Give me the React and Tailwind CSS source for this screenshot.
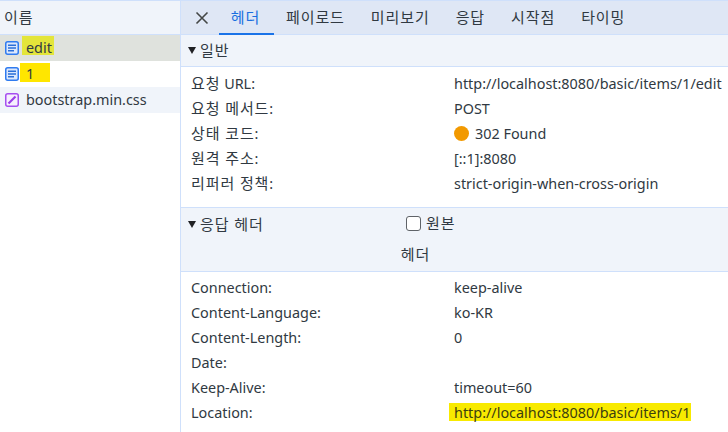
import React from 'react';

const font = { fontFamily: '"Noto Sans", "Noto Sans CJK KR", sans-serif' };

// Korean runs are wider in the reference than Noto's default advance
function K({ children }) {
  return <span className="text-[15px] tracking-[0.9px]">{children}</span>;
}

function DocIcon() {
  return (
    <svg width="14" height="14" viewBox="0 0 14 14" className="shrink-0">
      <rect x="0.75" y="0.75" width="12.5" height="12.5" rx="2" fill="#dce8fc" stroke="#2f7bf0" strokeWidth="1.5" />
      <path d="M3 4.3h8M3 7h8M3 9.7h6" stroke="#2a6fd8" strokeWidth="1.4" />
    </svg>
  );
}

function CssIcon() {
  return (
    <svg width="14" height="14" viewBox="0 0 14 14" className="shrink-0">
      <rect x="0.75" y="0.75" width="12.5" height="12.5" rx="2" fill="#f6effe" stroke="#a64ff0" strokeWidth="1.5" />
      <path d="M3.5 10.5l7-7" stroke="#9a3fe8" strokeWidth="2.2" />
    </svg>
  );
}

function FileRow({ icon, name, rowClass, mark }) {
  return (
    <div className={`isolate relative flex items-center gap-[7px] pl-[5px] h-[26px] ${rowClass}`}>
      {mark && <span className={`absolute -z-10 ${mark}`} />}
      {icon}
      <span>{name}</span>
    </div>
  );
}

function Row({ label, children }) {
  return (
    <div className="flex items-center h-[25px]">
      <div className="w-[273px] pl-[10px] shrink-0">{label}</div>
      <div className="flex items-center">{children}</div>
    </div>
  );
}

function Triangle() {
  return <span className="w-0 h-0 border-x-[4.5px] border-x-transparent border-t-[7px] border-t-[#202124] mr-[4px] ml-[7px]" />;
}

export default function App() {
  const tabs = ['페이로드', '미리보기', '응답', '시작점', '타이밍'];
  return (
    <div className="w-[728px] h-[432px] overflow-hidden flex bg-white text-[14.4px] text-[#303942] border-t border-[#cfe0fb]" style={font}>
      <div className="w-[180px] shrink-0 flex flex-col">
        <div className="h-[34px] flex items-center pl-[4px] bg-[#f0f4fa] border-b border-[#cfe0fb]"><K>이름</K></div>
        <FileRow icon={<DocIcon />} name="edit" rowClass="bg-[#dfe2dd]" mark="left-[22px] w-[32px] top-[1px] h-[19px] bg-[#e3e53a]" />
        <FileRow icon={<DocIcon />} name="1" rowClass="bg-white" mark="left-[20px] w-[30px] top-[2px] h-[19px] bg-[#ffe600]" />
        <FileRow icon={<CssIcon />} name="bootstrap.min.css" rowClass="bg-[#f0f4fa]" />
      </div>

      <div className="flex-1 flex flex-col border-l border-[#cfe0fb]">
        <div className="h-[34px] flex items-stretch bg-[#dfe7f5] border-b border-[#cfe0fb]">
          <div className="w-[38px] flex items-center justify-center pl-[3px]">
            <svg width="14" height="14" viewBox="0 0 14 14">
              <path d="M1.5 1.5l11 11M12.5 1.5l-11 11" stroke="#444746" strokeWidth="1.6" />
            </svg>
          </div>
          <div className="w-[55px] flex items-center justify-center pr-[2px] text-[#1a6fe0] border-b-2 border-[#1a73e8] -mb-[1px]"><K>헤더</K></div>
          <div className="flex items-center gap-[26px] pl-[12px]">
            {tabs.map(t => <K key={t}>{t}</K>)}
          </div>
        </div>

        <div className="h-[32px] flex items-center bg-[#f0f4fa] border-b border-[#cfe0fb]">
          <Triangle /><K>일반</K>
        </div>
        <div className="py-[4px] h-[141px] border-b border-[#cfe0fb]">
          <Row label={<><K>요청</K> URL:</>}>http://localhost:8080/basic/items/1/edit</Row>
          <Row label={<><K>요청 메서드</K>:</>}>POST</Row>
          <Row label={<><K>상태 코드</K>:</>}>
            <span className="w-[15px] h-[15px] rounded-full bg-[#f29900] mr-[6px]" />302 Found
          </Row>
          <Row label={<><K>원격 주소</K>:</>}>[::1]:8080</Row>
          <Row label={<><K>리퍼러 정책</K>:</>}>strict-origin-when-cross-origin</Row>
        </div>

        <div className="h-[64px] bg-[#f0f4fa] border-b border-[#cfe0fb] flex flex-col">
          <div className="h-[32px] flex items-center relative">
            <Triangle /><K>응답 헤더</K>
            <span className="absolute left-[225px] top-[8px] w-[15px] h-[15px] rounded-[3px] border border-[#5f6368] bg-white" />
            <span className="absolute left-[245px] top-[4px]"><K>원본</K></span>
          </div>
          <div className="h-[29px] flex items-center justify-center pr-[78px]"><K>헤더</K></div>
        </div>
        <div className="py-[3px]">
          <Row label="Connection:">keep-alive</Row>
          <Row label="Content-Language:">ko-KR</Row>
          <Row label="Content-Length:">0</Row>
          <Row label="Date:" />
          <Row label="Keep-Alive:">timeout=60</Row>
          <Row label="Location:">
            <span className="relative isolate text-[#3d3f10]">
              <span className="absolute -z-10 -left-[5px] -right-[1px] top-[1px] h-[18px] bg-[#f8ea00]" />
              http://localhost:8080/basic/items/1
            </span>
          </Row>
        </div>
      </div>
    </div>
  );
}
